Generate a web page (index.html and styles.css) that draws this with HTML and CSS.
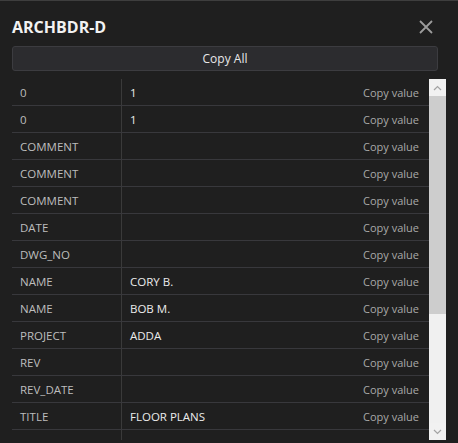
FILE: index.html
```html
<!DOCTYPE html>
<html>
<head>
<meta charset="utf-8">
<link rel="stylesheet" href="styles.css">
</head>
<body>
<div class="dialog">
  <div class="header">
    <div class="title">ARCHBDR-D</div>
    <button class="close" aria-label="Close">
      <svg width="16" height="16" viewBox="0 0 16 16"><path d="M2 2 L14 14 M14 2 L2 14" stroke="#9c9c9c" stroke-width="1.8" fill="none"/></svg>
    </button>
  </div>
  <button class="copy-all">Copy All</button>
  <div class="table-wrap">
    <div class="rows">
      <div class="row"><div class="key">0</div><div class="val">1</div><div class="copy">Copy value</div></div>
      <div class="row"><div class="key">0</div><div class="val">1</div><div class="copy">Copy value</div></div>
      <div class="row"><div class="key">COMMENT</div><div class="val"></div><div class="copy">Copy value</div></div>
      <div class="row"><div class="key">COMMENT</div><div class="val"></div><div class="copy">Copy value</div></div>
      <div class="row"><div class="key">COMMENT</div><div class="val"></div><div class="copy">Copy value</div></div>
      <div class="row"><div class="key">DATE</div><div class="val"></div><div class="copy">Copy value</div></div>
      <div class="row"><div class="key">DWG_NO</div><div class="val"></div><div class="copy">Copy value</div></div>
      <div class="row"><div class="key">NAME</div><div class="val">CORY B.</div><div class="copy">Copy value</div></div>
      <div class="row"><div class="key">NAME</div><div class="val">BOB M.</div><div class="copy">Copy value</div></div>
      <div class="row"><div class="key">PROJECT</div><div class="val">ADDA</div><div class="copy">Copy value</div></div>
      <div class="row"><div class="key">REV</div><div class="val"></div><div class="copy">Copy value</div></div>
      <div class="row"><div class="key">REV_DATE</div><div class="val"></div><div class="copy">Copy value</div></div>
      <div class="row"><div class="key">TITLE</div><div class="val">FLOOR PLANS</div><div class="copy">Copy value</div></div>
      <div class="row"><div class="key">VIEW</div><div class="val"></div><div class="copy">Copy value</div></div>
    </div>
    <div class="scrollbar">
      <div class="sb-btn"><svg width="9" height="6" viewBox="0 0 9 6"><path d="M1 5 L4.5 1.5 L8 5" stroke="#a3a3a3" stroke-width="1.2" fill="none"/></svg></div>
      <div class="sb-track"><div class="sb-thumb"></div></div>
      <div class="sb-btn"><svg width="9" height="6" viewBox="0 0 9 6"><path d="M1 1 L4.5 4.5 L8 1" stroke="#a3a3a3" stroke-width="1.2" fill="none"/></svg></div>
    </div>
  </div>
</div>
</body>
</html>
```

FILE: styles.css
```css
* { box-sizing: border-box; }
html, body {
  margin: 0;
  padding: 0;
  background: #1f1f1f;
  height: 443px;
  overflow: hidden;
}
body {
  font-family: "Open Sans", "Noto Sans", sans-serif;
  color: #e6e6e6;
}
.dialog {
  border-top: 1px solid #3e3e3e;
  height: 443px;
  padding: 0 12px 0 12px;
  display: flex;
  flex-direction: column;
}
.header {
  height: 45px;
  display: flex;
  align-items: center;
  justify-content: space-between;
  padding-top: 6px;
}
.title {
  font-weight: 700;
  font-size: 16px;
  color: #f2f2f2;
  letter-spacing: 0;
}
.close {
  background: none;
  border: none;
  padding: 0;
  width: 16px;
  height: 16px;
  margin-right: 12px;
  display: flex;
}
.copy-all {
  height: 25px;
  width: 426px;
  background: #2c2c2f;
  border: 1px solid #3c3c40;
  border-radius: 3px;
  color: #e8e8e8;
  font-family: "Open Sans", "Noto Sans", sans-serif;
  font-size: 12px;
  padding: 0;
}
.table-wrap {
  margin-top: 8px;
  height: 361px;
  display: flex;
}
.rows {
  width: 417px;
  height: 361px;
  overflow: hidden;
}
.row {
  height: 27px;
  display: flex;
  align-items: center;
  border-bottom: 1px solid #38383c;
  font-size: 11.5px;
}
.key {
  width: 110px;
  height: 100%;
  border-right: 1px solid #3a3a3a;
  padding-left: 8px;
  color: #bdbdbd;
  display: flex;
  align-items: center;
}
.val {
  flex: 1;
  padding-left: 8px;
  color: #ececec;
}
.copy {
  padding-right: 10px;
  color: #a9a9a9;
  font-size: 11px;
}
.scrollbar {
  width: 17px;
  height: 361px;
  background: #f0f0f0;
  display: flex;
  flex-direction: column;
}
.sb-btn {
  height: 17px;
  display: flex;
  align-items: center;
  justify-content: center;
  background: #f1f1f1;
}
.sb-track {
  flex: 1;
}
.sb-thumb {
  height: 218px;
  background: #cdcdcd;
}
```
